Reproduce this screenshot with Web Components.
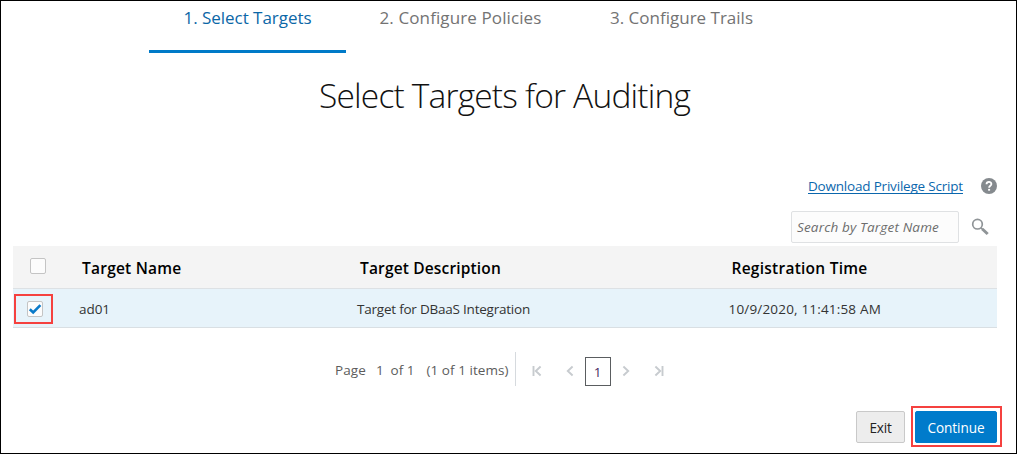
<!DOCTYPE html>
<html lang="en">
<head>
<meta charset="utf-8">
<title>Select Targets for Auditing</title>
<style>
body{margin:0;background:#fff;font-family:"Open Sans","Noto Sans",sans-serif}
</style>
</head>
<body>
<audit-wizard></audit-wizard>
<script>
const define = (name, html, setup) => customElements.define(name, class extends HTMLElement {
  connectedCallback() {
    if (this.shadowRoot) return;
    const t = document.createElement('template');
    t.innerHTML = html;
    this.attachShadow({ mode: 'open' }).append(t.content.cloneNode(true));
    if (setup) setup(this, this.shadowRoot);
  }
});

// One-line label whose tracking is adjusted to fill the width given in "w".
define('ui-label', `<style>
:host{display:block;white-space:pre;flex:none}
span{display:inline-block;white-space:pre}
:host([link]) span{text-decoration:underline;text-underline-offset:2px;text-decoration-thickness:1px;text-decoration-skip-ink:none}
</style><span><slot></slot></span>`, (el, root) => {
  const w = +el.getAttribute('w'), n = el.textContent.length;
  el.style.width = w + 'px';
  const natural = root.querySelector('span').getBoundingClientRect().width;
  el.style.letterSpacing = ((w - natural) / n).toFixed(3) + 'px';
});

define('wizard-step', `<style>
:host{display:flex;box-sizing:border-box;width:197px;height:52px;padding-top:5px;justify-content:center;color:#737373;font-size:17px;line-height:24px;border-bottom:3px solid transparent}
:host([current]){color:#0b67a7;border-color:#007ac8}
</style><slot></slot>`);

define('check-box', `<style>
:host{display:block;box-sizing:border-box;width:16px;height:16px;border:1px solid #c4c4c4;border-radius:2px;background:#fcfcfc}
svg{display:none;width:14px;height:14px}
:host([checked]) svg{display:block}
</style><svg viewBox="0 0 14 14"><path d="M1.8 7.2 5.2 10.5 12.4 3.2" fill="none" stroke="#0a7ac9" stroke-width="2.6"/></svg>`);

define('target-row', `<style>
:host{display:grid;grid-template-columns:66px 278px 371.5px 1fr;box-sizing:border-box;height:39px;border-bottom:1px solid #d9dfe3;background:#e7f3fa;color:#333;font-size:13.5px;line-height:40px}
:host([head]){height:43px;padding-left:3px;background:#f4f4f4;color:#000;font-size:15.5px;font-weight:600;line-height:45px;border-color:#dde1e4}
</style><slot></slot>`);

define('highlight-box', `<style>
:host{display:flex;box-sizing:border-box;border:2px solid #f5413f;align-items:center;justify-content:center}
</style><slot></slot>`);

define('page-arrow', `<style>
:host{display:block;width:10px;height:12px;color:#c7cbcf}
:host([to=next]),:host([to=last]){transform:scaleX(-1)}
svg{display:block}
.bar{display:none}
:host([to=first]) .bar,:host([to=last]) .bar{display:block}
</style><svg width="10" height="12" viewBox="0 0 10 12" fill="none" stroke="currentColor" stroke-width="1.9"><path class="bar" d="M1.5 1v10"/><path d="M8.6 1.5 3.8 6l4.8 4.5"/></svg>`);

define('table-pager', `<style>
:host{display:flex;height:34px;padding-left:334px;color:#5c5c5c;font-size:13.5px;line-height:36px}
.gap1{margin-left:10px}.gap2{margin-left:6.5px}.gap3{margin-left:12px}
.rule{width:1px;height:34px;background:#d6dade;margin-left:6px}
.nav{display:flex;align-items:center;height:34px;padding-top:2px;margin-left:16.5px}
.current{box-sizing:border-box;width:26px;height:29px;border:1px solid #5a5d60;color:#4a1f62;text-align:center;line-height:28px;margin:0 11.5px 0 11px}
page-arrow[to=prev]{margin-left:21.5px}page-arrow[to=last]{margin-left:22px}
</style>
<ui-label w="31">Page</ui-label><ui-label class="gap1" w="8">1</ui-label><ui-label class="gap2" w="24">of 1</ui-label><ui-label class="gap3" w="82">(1 of 1 items)</ui-label>
<div class="rule"></div>
<div class="nav"><page-arrow to="first"></page-arrow><page-arrow to="prev"></page-arrow><div class="current">1</div><page-arrow to="next"></page-arrow><page-arrow to="last"></page-arrow></div>`);

define('push-button', `<style>
:host{display:flex;box-sizing:border-box;height:32px;justify-content:center;border:1px solid #c9c9c9;border-radius:2px;background:#ededed;color:#222;font-size:13.6px;line-height:32px}
:host([primary]){background:#007bcb;border-color:#007bcb;color:#fff}
</style><slot></slot>`);

define('audit-wizard', `<style>
:host{display:flex;flex-direction:column;box-sizing:border-box;width:1017px;height:454px;border:1px solid #000;background:#fff}
nav{display:flex;padding-left:148px;height:52px}
nav wizard-step:nth-child(2){width:229px}
nav wizard-step:nth-child(3){width:213px}
h1{display:flex;margin:21px 0 0;padding-left:318px;height:42px;line-height:42px;font-size:33.5px;font-weight:300;color:#111}
.links{display:flex;align-items:center;height:24px;margin-top:58px;padding-left:807px;color:#0b67ad;font-size:13.5px;line-height:24px}
.help{display:block;margin-left:17px}
.search{display:flex;height:32px;margin-top:13px;padding-left:790px;align-items:center}
.field{box-sizing:border-box;width:168px;height:32px;border:1px solid #dfe1e3;border-radius:2px;background:#fcfcfc;padding-left:5px;color:#6d6d6d;font-size:13.5px;font-style:italic;line-height:30px}
.search svg{display:block;margin-left:12px}
.table{width:984px;margin:3px 0 0 12px}
target-row[head] check-box{margin:12px 0 0 14px}
highlight-box.pick{width:39px;height:30px;margin:5px 0 0 1px;padding-left:3px}
table-pager{margin-top:24px}
.actions{display:flex;align-items:center;margin-top:20px;padding-left:855px}
.exit{width:49px}
.go{width:91px;height:41px;margin-left:6px;padding-right:1px}
.go push-button{width:82px}
</style>
<nav><wizard-step current><ui-label w="128">1. Select Targets</ui-label></wizard-step><wizard-step><ui-label w="162">2. Configure Policies</ui-label></wizard-step><wizard-step><ui-label w="143">3. Configure Trails</ui-label></wizard-step></nav>
<h1><ui-label w="371">Select Targets for Auditing</ui-label></h1>
<div class="links"><ui-label link w="155">Download Privilege Script</ui-label>
<svg class="help" width="18" height="18" viewBox="0 0 18 18"><circle cx="9" cy="9" r="8" fill="#858a8e"/><path d="M6.5 7.3C6.6 4.2 11.4 4.2 11.4 7.1 11.4 8.8 9.1 8.7 9.1 10.7" fill="none" stroke="#fff" stroke-width="1.8"/><path d="M8.1 11.9h2v1.8h-2z" fill="#fff"/></svg></div>
<div class="search"><div class="field"><ui-label w="142">Search by Target Name</ui-label></div>
<svg width="18" height="18" viewBox="0 0 18 18" fill="none" stroke="#8f9497"><circle cx="6.5" cy="6.2" r="4.8" stroke-width="1.7"/><path d="M10 9.8 12 11.7" stroke-width="1.6"/><path d="M11.3 11 16.7 16" stroke-width="3"/></svg></div>
<div class="table">
<target-row head><check-box></check-box><ui-label w="99.5">Target Name</ui-label><ui-label w="141">Target Description</ui-label><ui-label w="136">Registration Time</ui-label></target-row>
<target-row><highlight-box class="pick"><check-box checked></check-box></highlight-box><ui-label w="31">ad01</ui-label><ui-label w="173">Target for DBaaS Integration</ui-label><ui-label w="152.5">10/9/2020, 11:41:58 AM</ui-label></target-row>
</div>
<table-pager></table-pager>
<div class="actions"><push-button class="exit"><ui-label w="22">Exit</ui-label></push-button><highlight-box class="go"><push-button primary><ui-label w="57">Continue</ui-label></push-button></highlight-box></div>`);
</script>
</body>
</html>
